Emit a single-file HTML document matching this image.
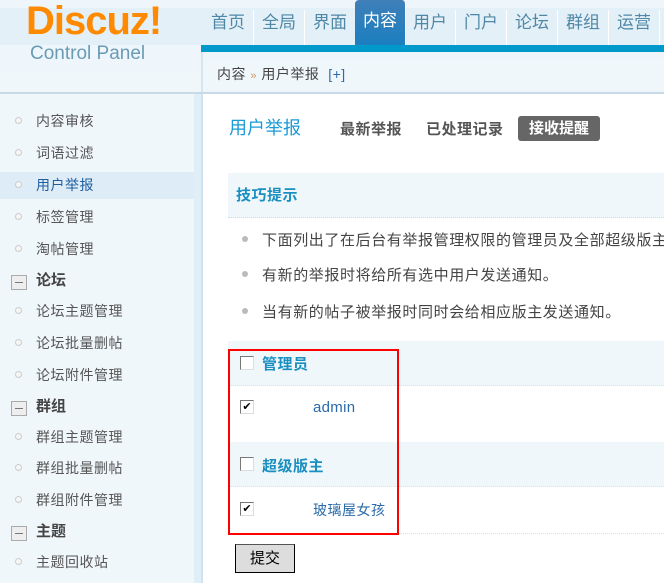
<!DOCTYPE html>
<html><head><meta charset="utf-8"><style>
*{margin:0;padding:0;box-sizing:border-box}
body{width:664px;height:583px;overflow:hidden;position:relative;background:#fff;font-family:"Liberation Sans","Noto Sans CJK SC","WenQuanYi Zen Hei",sans-serif;font-size:14px;color:#333}
.a{position:absolute;white-space:nowrap}
.nav{position:absolute;top:10px;height:35px;width:51px;text-align:center;line-height:26px;font-size:17px;color:#4f88a6;border-right:1px solid #fff}
.si{position:absolute;left:36px;font-size:14px;color:#555;line-height:20px;letter-spacing:.5px;white-space:nowrap}
.dot{position:absolute;left:15px;width:7px;height:7px;border-radius:50%;border:1px solid #ccc;background:#f6f6f6}
.gb{position:absolute;left:11px;width:16px;height:15px;border:1px solid #aaa;background:#eee}
.gb:after{content:"";position:absolute;left:3px;top:6px;width:8px;height:1px;background:#777}
.gt{position:absolute;left:36px;font-weight:bold;font-size:15px;color:#444;line-height:20px}
.cb{position:absolute;width:14px;height:14px;border:1px solid #777;border-right-color:#ddd;border-bottom-color:#ddd;background:#fff;font-size:11px;line-height:12px;text-align:center;color:#000}
.bl{position:absolute;left:262px;color:#444;font-size:15px;letter-spacing:.6px;white-space:nowrap}
</style></head><body>
<div class="a" style="left:0;top:0;width:664px;height:92px;background:#eef6fb"></div>
<div class="a" style="left:0;top:8px;width:664px;height:37px;background:#e4f0f8"></div>
<div class="a" style="left:0;top:72px;width:202px;height:20px;background:#f0f7fb"></div>
<div class="a" style="left:26px;top:-1px;font-size:40px;font-weight:bold;color:#ff8a00;letter-spacing:-1px">Discuz!</div>
<div class="a" style="left:30px;top:43px;font-size:19px;color:#6a9bb4">Control Panel</div>
<div class="nav" style="left:203px">首页</div>
<div class="nav" style="left:254px">全局</div>
<div class="nav" style="left:305px">界面</div>
<div class="nav" style="left:355px;top:0;height:45px;padding-top:8px;background:linear-gradient(#3f7fb8,#1b7fc0);color:#fff;border-radius:4px 4px 0 0">内容</div>
<div class="nav" style="left:405px">用户</div>
<div class="nav" style="left:456px">门户</div>
<div class="nav" style="left:507px">论坛</div>
<div class="nav" style="left:558px">群组</div>
<div class="nav" style="left:609px">运营</div>
<div class="a" style="left:201px;top:45px;width:463px;height:7px;background:#0099cc"></div>
<div class="a" style="left:201px;top:52px;width:2px;height:40px;background:#d6e6f0"></div>
<div class="a" style="left:203px;top:58px;width:461px;height:32px;background:#f0f7fb"></div>
<div class="a" style="left:217px;top:64px;font-size:14px;color:#444;letter-spacing:.5px">内容 <span style="color:#c96;font-size:11px">»</span> 用户举报 &nbsp;<span style="color:#2b6aa8">[+]</span></div>
<div class="a" style="left:0;top:92px;width:664px;height:2px;background:#c8dae6"></div>
<div class="a" style="left:0;top:94px;width:200px;height:489px;background:#f0f7fb"></div>
<div class="a" style="left:194px;top:94px;width:9px;height:489px;background:#e0eef8;border-right:2px solid #cfe2ef"></div>
<div class="a" style="left:0;top:172px;width:194px;height:27px;background:#ddecf7"></div>
<div class="dot" style="top:117px"></div><div class="si" style="top:111px">内容审核</div>
<div class="dot" style="top:149px"></div><div class="si" style="top:143px">词语过滤</div>
<div class="dot" style="top:181px"></div><div class="si" style="top:175px;color:#1f5fa0">用户举报</div>
<div class="dot" style="top:213px"></div><div class="si" style="top:207px">标签管理</div>
<div class="dot" style="top:245px"></div><div class="si" style="top:239px">淘帖管理</div>
<div class="gb" style="top:275px"></div><div class="gt" style="top:271px">论坛</div>
<div class="dot" style="top:307px"></div><div class="si" style="top:301px">论坛主题管理</div>
<div class="dot" style="top:339px"></div><div class="si" style="top:333px">论坛批量删帖</div>
<div class="dot" style="top:371px"></div><div class="si" style="top:365px">论坛附件管理</div>
<div class="gb" style="top:401px"></div><div class="gt" style="top:397px">群组</div>
<div class="dot" style="top:433px"></div><div class="si" style="top:427px">群组主题管理</div>
<div class="dot" style="top:464px"></div><div class="si" style="top:458px">群组批量删帖</div>
<div class="dot" style="top:496px"></div><div class="si" style="top:490px">群组附件管理</div>
<div class="gb" style="top:526px"></div><div class="gt" style="top:522px">主题</div>
<div class="dot" style="top:558px"></div><div class="si" style="top:552px">主题回收站</div>
<div class="a" style="left:229px;top:114px;font-size:18px;color:#1a9ad6">用户举报</div>
<div class="a" style="left:340px;top:118px;font-size:15px;font-weight:bold;color:#555;letter-spacing:.5px">最新举报</div>
<div class="a" style="left:426px;top:118px;font-size:15px;font-weight:bold;color:#555;letter-spacing:.5px">已处理记录</div>
<div class="a" style="left:518px;top:116px;width:82px;height:25px;background:#666;border-radius:3px;color:#fff;font-weight:bold;font-size:15px;text-align:center;line-height:25px">接收提醒</div>
<div class="a" style="left:228px;top:173px;width:436px;height:45px;background:#f0f7fb;border-bottom:1px dotted #cdd"></div>
<div class="a" style="left:236px;top:184px;font-size:15px;font-weight:bold;color:#1a8fc0;letter-spacing:.5px">技巧提示</div>
<div class="a" style="left:242px;top:236px;width:6px;height:6px;border-radius:50%;background:#bbb"></div>
<div class="bl" style="top:229px">下面列出了在后台有举报管理权限的管理员及全部超级版主。</div>
<div class="a" style="left:242px;top:271px;width:6px;height:6px;border-radius:50%;background:#bbb"></div>
<div class="bl" style="top:264px">有新的举报时将给所有选中用户发送通知。</div>
<div class="a" style="left:242px;top:308px;width:6px;height:6px;border-radius:50%;background:#bbb"></div>
<div class="bl" style="top:301px">当有新的帖子被举报时同时会给相应版主发送通知。</div>
<div class="a" style="left:228px;top:341px;width:436px;height:45px;background:#f0f7fb;border-bottom:1px dotted #dde"></div>
<div class="a" style="left:228px;top:442px;width:436px;height:45px;background:#f0f7fb;border-bottom:1px dotted #dde"></div>
<div class="a" style="left:228px;top:533px;width:436px;height:1px;border-bottom:1px dotted #dde"></div>
<div class="cb" style="left:240px;top:356px"></div>
<div class="a" style="left:262px;top:353px;font-weight:bold;color:#1a8fc0;font-size:15px;letter-spacing:.5px">管理员</div>
<div class="cb" style="left:240px;top:400px">✔</div>
<div class="a" style="left:313px;top:399px;color:#2b6aa8;font-size:15px;letter-spacing:.3px">admin</div>
<div class="cb" style="left:240px;top:457px"></div>
<div class="a" style="left:262px;top:455px;font-weight:bold;color:#1a8fc0;font-size:15px;letter-spacing:.5px">超级版主</div>
<div class="cb" style="left:240px;top:502px">✔</div>
<div class="a" style="left:313px;top:500px;color:#2b6aa8;letter-spacing:.5px">玻璃屋女孩</div>
<div class="a" style="left:228px;top:349px;width:171px;height:186px;border:2px solid #f00"></div>
<div class="a" style="left:235px;top:544px;width:60px;height:29px;border:1px solid #000;border-top-color:#555;background:#ddd;text-align:center;line-height:27px;color:#000;font-size:15px">提交</div>
</body></html>
